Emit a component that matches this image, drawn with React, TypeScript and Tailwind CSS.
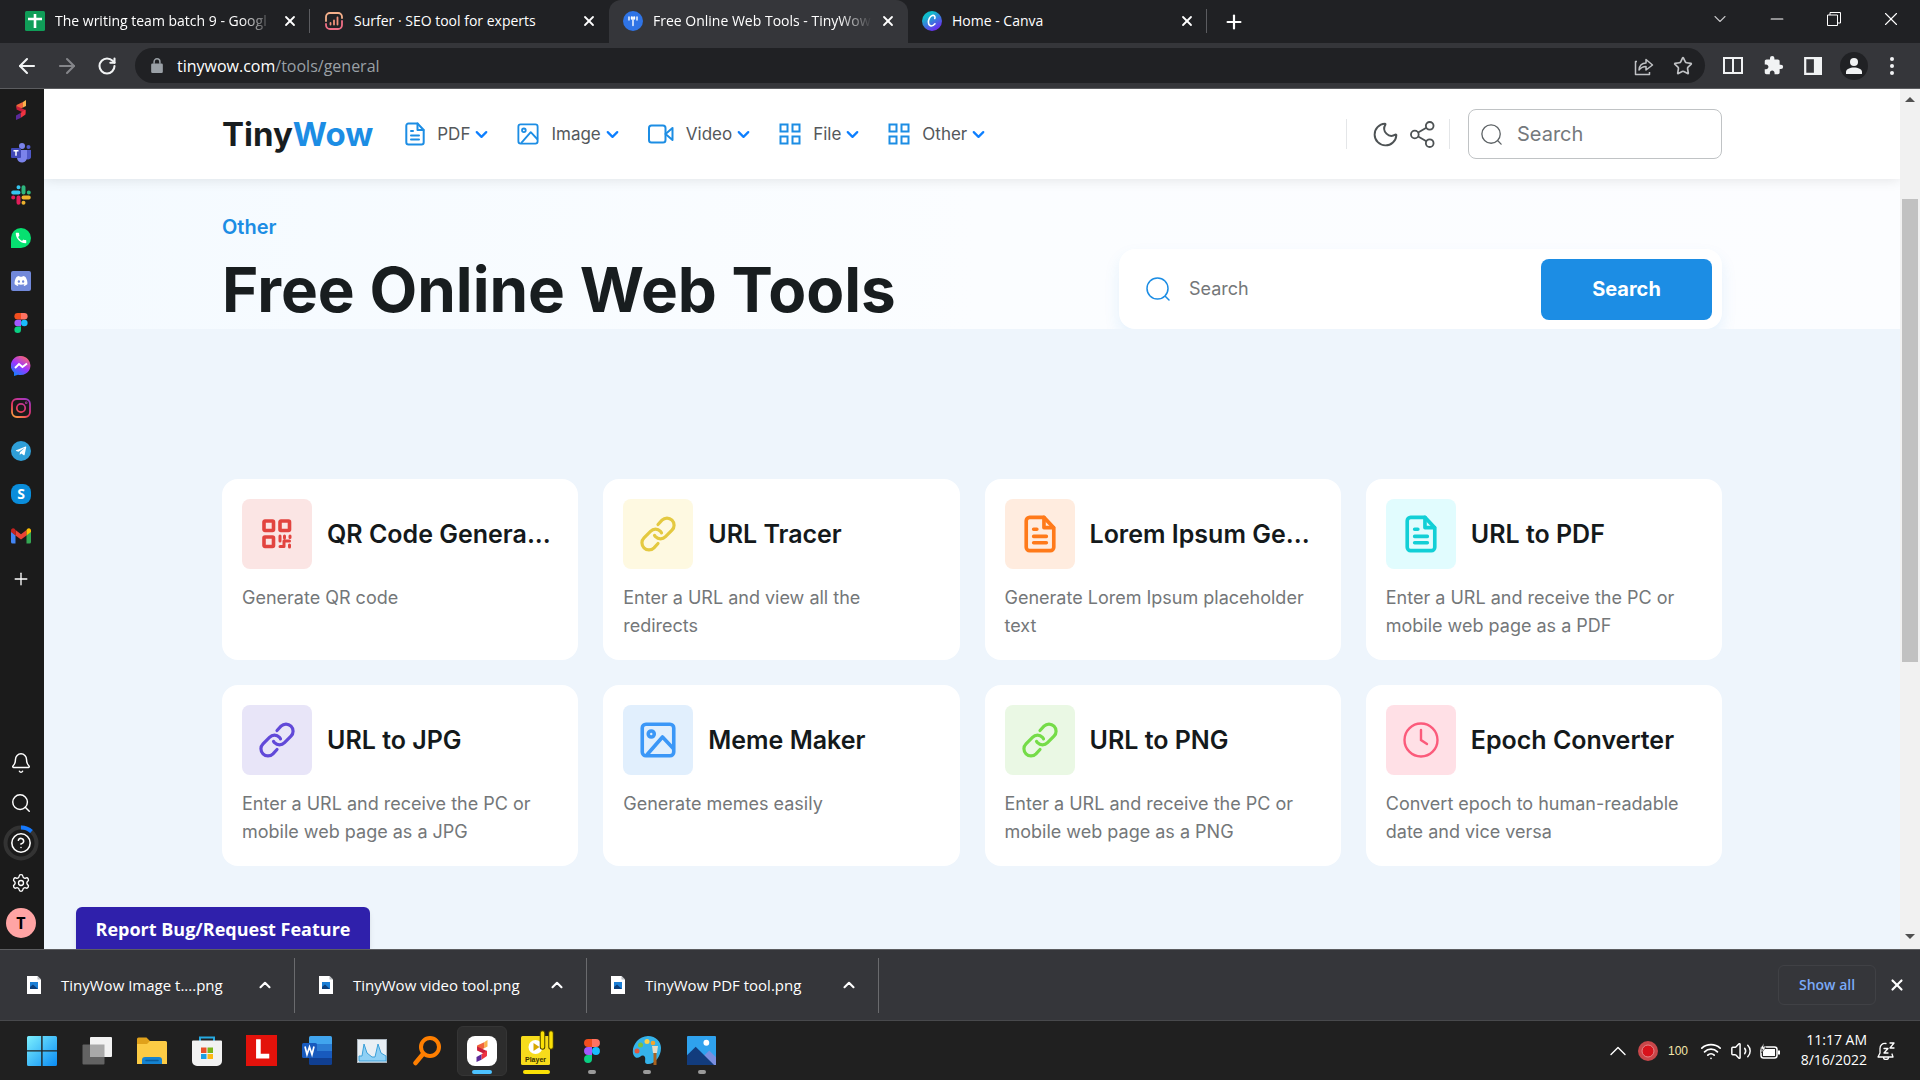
import type { ReactNode } from "react";
import {
  ArrowLeft,
  ArrowRight,
  Bell,
  ChevronDown,
  ChevronUp,
  CircleHelp,
  Minus,
  Moon,
  Plus,
  RotateCw,
  Search,
  Settings,
  Star,
  Volume2,
  Wifi,
  X,
} from "lucide-react";
import { FaDiscord, FaTelegramPlane } from "react-icons/fa";
import { MdCall, MdExtension } from "react-icons/md";

/* ---------- page icons ---------- */

type IconProps = { className?: string; stroke?: number };

function FileIcon({ className, stroke = 2 }: IconProps) {
  return (
    <svg viewBox="2 0 20 24" fill="none" stroke="currentColor" strokeWidth={stroke} strokeLinecap="round" strokeLinejoin="round" className={className}>
      <path d="M14.5 1.5H5.5A2.2 2.2 0 0 0 3.3 3.7v16.6a2.2 2.2 0 0 0 2.2 2.2h13a2.2 2.2 0 0 0 2.2-2.2V8z" />
      <path d="M14.5 1.5V8h6M8 9h2M8 13.5h8M8 17.5h8" />
    </svg>
  );
}

function ImageIcon({ className, stroke = 2 }: IconProps) {
  return (
    <svg viewBox="0 0 24 24" fill="none" stroke="currentColor" strokeWidth={stroke} strokeLinejoin="round" className={className}>
      <rect x="1.5" y="1.5" width="21" height="21" rx="2.5" />
      <circle cx="7.5" cy="8" r="2" />
      <path d="M4.5 22 15 10l7.5 8" />
    </svg>
  );
}

function VideoIcon({ className }: IconProps) {
  return (
    <svg viewBox="0 0 26 22" fill="none" stroke="currentColor" strokeWidth="2" strokeLinejoin="round" className={className}>
      <rect x="1" y="2.5" width="16.5" height="17" rx="2.5" />
      <path d="m17.5 11 7-6v12z" />
    </svg>
  );
}

function GridIcon({ className }: IconProps) {
  return (
    <svg viewBox="0 0 22 22" fill="none" stroke="currentColor" strokeWidth="2" className={className}>
      <rect x="1.5" y="1.5" width="7" height="7" />
      <rect x="13.5" y="1.5" width="7" height="7" />
      <rect x="1.5" y="13.5" width="7" height="7" />
      <rect x="13.5" y="13.5" width="7" height="7" />
    </svg>
  );
}

function LinkIcon({ className }: IconProps) {
  return (
    <svg viewBox="0 0 36 36" fill="none" stroke="currentColor" strokeWidth="3.2" strokeLinecap="round" className={className}>
      <path d="M18 8.5 22 4.2a7 7 0 0 1 10 10l-6.5 6.500a7 7 0 0 1-10 0 6.5 6.5 0 0 1-1-1.4" />
      <path d="m18 27.5-4 4.300a7 7 0 0 1-10-10l6.5-6.500a7 7 0 0 1 10 0q.8.8 1 1.6" />
    </svg>
  );
}

function QrIcon({ className }: IconProps) {
  return (
    <svg viewBox="0 0 30 30" fill="none" stroke="currentColor" strokeWidth="3.6" strokeLinejoin="round" className={className}>
      <rect x="2" y="2" width="9.5" height="9.5" rx="1" />
      <rect x="18" y="2" width="9.5" height="9.5" rx="1" />
      <rect x="2" y="18" width="9.5" height="9.5" rx="1" />
      <path strokeWidth="3" strokeLinecap="round" d="M18 17v5M18 27.5h4V22h5.5M22.5 17v2M28 17v1.5M27.5 26v2" />
    </svg>
  );
}

function ClockIcon({ className }: IconProps) {
  return (
    <svg viewBox="0 0 36 36" fill="none" stroke="currentColor" strokeWidth="2.4" strokeLinecap="round" className={className}>
      <circle cx="18" cy="18" r="16.5" />
      <path d="M18 8v10l6 4" />
    </svg>
  );
}

function LensIcon({ className }: IconProps) {
  return (
    <svg viewBox="0 0 24 24" fill="none" stroke="currentColor" strokeWidth="1.5" strokeLinecap="round" className={className}>
      <circle cx="11.5" cy="11.5" r="10.5" />
      <path d="m19.5 19.5 3.5 3.5" />
    </svg>
  );
}

function ShareNodes({ className }: IconProps) {
  return (
    <svg viewBox="0 0 26 28" fill="none" stroke="currentColor" strokeWidth="1.9" className={className}>
      <circle cx="5" cy="14" r="4" />
      <circle cx="20.5" cy="5" r="4" />
      <circle cx="20.5" cy="23" r="4" />
      <path d="m8.5 12 8.5-5M8.5 16l8.5 5" />
    </svg>
  );
}

/* ---------- brand icons ---------- */

function SurferMark({ className }: IconProps) {
  return (
    <svg viewBox="0 0 20 20" className={className}>
      <path fill="#f9b24a" d="M15 0v6l-3 1.5V2z" />
      <path fill="#f0643c" d="M12 2v5.5L8.5 9 5.5 7.500V5z" />
      <path fill="#c81e3c" d="M5.5 6 14.5 10v3.5L12 12.5 5.5 9.5z" />
      <path fill="#ef3340" d="M14.500 9.500v5L9.5 18v-5l2-1.5z" />
      <path fill="#5b2a9a" d="M9.5 13v5L5 20v-4.500z" />
    </svg>
  );
}

function TeamsMark({ className }: IconProps) {
  return (
    <svg viewBox="0 0 20 20" className={className}>
      <circle cx="17.5" cy="4" r="2" fill="#5059c9" />
      <path fill="#5059c9" d="M14 7h6v6a3 3 0 0 1-6 1z" />
      <circle cx="11" cy="3" r="3" fill="#7b83eb" />
      <path fill="#7b83eb" d="M6 7h10v7a5 5 0 0 1-10 1z" />
      <rect y="5" width="10" height="10" rx="1" fill="#4048b5" />
      <path stroke="#fff" strokeWidth="1.5" d="M2.5 7.8h5M5 7.8v5" />
    </svg>
  );
}

function SlackMark({ className }: IconProps) {
  return (
    <svg viewBox="0 0 20 20" strokeWidth="4" strokeLinecap="round" className={className}>
      <path stroke="#36c5f0" d="M2.2 7.5h5.3M7.5 2.2h0" />
      <path stroke="#2eb67d" d="M12.5 2.2v5.3M17.8 7.5h0" />
      <path stroke="#ecb22e" d="M12.5 12.5h5.3M12.5 17.8h0" />
      <path stroke="#e01e5a" d="M7.5 12.5v5.3M2.2 12.5h0" />
    </svg>
  );
}

function WhatsappMark() {
  return (
    <span className="flex size-5 items-center justify-center rounded-full rounded-bl-sm bg-[#06e070] text-white">
      <MdCall className="size-[14px]" />
    </span>
  );
}

function DiscordMark() {
  return (
    <span className="flex size-5 items-center justify-center rounded-xs bg-[#7289da] text-white">
      <FaDiscord className="size-[14px]" />
    </span>
  );
}

function FigmaMark({ className }: IconProps) {
  return (
    <svg viewBox="0 0 20 20" className={className}>
      <path fill="#f24e1e" d="M10 0H6.7a3.3 3.3 0 0 0 0 6.600H10z" />
      <path fill="#ff7262" d="M10 0h3.300a3.3 3.3 0 0 1 0 6.600H10z" />
      <path fill="#a259ff" d="M10 6.7H6.700a3.3 3.3 0 0 0 0 6.600H10z" />
      <circle cx="13.3" cy="10" r="3.3" fill="#1abcfe" />
      <path fill="#0acf83" d="M10 13.4H6.700a3.3 3.3 0 1 0 3.3 3.300z" />
    </svg>
  );
}

function MessengerMark({ className }: IconProps) {
  return (
    <svg viewBox="0 0 20 20" className={className}>
      <defs>
        <linearGradient id="messenger" x1="0.2" y1="1" x2="0.8" y2="0">
          <stop offset="0" stopColor="#0a84ff" />
          <stop offset=".5" stopColor="#a033ff" />
          <stop offset="1" stopColor="#ff6968" />
        </linearGradient>
      </defs>
      <path fill="url(#messenger)" d="M10 0a10 9.5 0 1 1-3 18.700L3 20v-3.500A9.5 9.5 0 0 1 10 0z" />
      <path d="m4 12 4-4 3.5 3L16 7.5" fill="none" stroke="#fff" strokeWidth="2" />
    </svg>
  );
}

function InstagramMark({ className }: IconProps) {
  return (
    <svg viewBox="0 0 20 20" fill="none" stroke="url(#insta)" strokeWidth="1.8" className={className}>
      <defs>
        <linearGradient id="insta" gradientUnits="userSpaceOnUse" x1="2" y1="20" x2="16" y2="0">
          <stop offset="0" stopColor="#fdb03c" />
          <stop offset=".45" stopColor="#ea3560" />
          <stop offset="1" stopColor="#9a37c8" />
        </linearGradient>
      </defs>
      <rect x="1" y="1" width="18" height="18" rx="5" />
      <circle cx="10" cy="10" r="4.2" />
      <circle cx="15.2" cy="4.8" r="0.4" />
    </svg>
  );
}

function TelegramMark() {
  return (
    <span className="flex size-5 items-center justify-center rounded-full bg-[#2f9fd8] text-white">
      <FaTelegramPlane className="size-3" />
    </span>
  );
}

function SkypeMark() {
  return (
    <span className="flex size-5 items-center justify-center rounded-lg bg-[#0a8ddb] text-sm leading-5 font-bold text-white">
      S
    </span>
  );
}

function GmailMark({ className }: IconProps) {
  return (
    <svg viewBox="0 0 20 20" className={className}>
      <path fill="#4285f4" d="M0 5.5 4.5 9v8.500h-3A1.5 1.5 0 0 1 0 16z" />
      <path fill="#34a853" d="M20 5.5 15.5 9v8.500h3A1.5 1.5 0 0 0 20 16z" />
      <path fill="#ea4335" d="m4.5 4 5.5 4.200L15.5 4v5.500L10 13.5 4.5 9.500z" />
      <path fill="#c5221f" d="M0 6V4.500a2.2 2.2 0 0 1 3.6-1.700L4.5 4v5.500z" />
      <path fill="#fbbc04" d="M20 6V4.500a2.2 2.2 0 0 0-3.6-1.700L15.5 4v5.500z" />
    </svg>
  );
}

/* ---------- data ---------- */

const tabs = [
  {
    title: "The writing team batch 9 - Googl",
    faded: true,
    divider: true,
    icon: (
      <svg viewBox="0 0 20 20" className="size-5">
        <rect width="20" height="20" rx="1.5" fill="#109d58" />
        <path d="M10 3v14M3 8h14" stroke="#fff" strokeWidth="2.6" />
      </svg>
    ),
  },
  {
    title: "Surfer · SEO tool for experts",
    icon: (
      <svg viewBox="0 0 20 20" fill="none" stroke="#f2917c" strokeWidth="1.8" strokeLinecap="round" className="size-5">
        <path d="M2 10V6a4 4 0 0 1 4-4h8a4 4 0 0 1 4 4v1" stroke="#f6b18c" />
        <path d="M18 10v4a4 4 0 0 1-4 4H6a4 4 0 0 1-4-4v-1" stroke="#ef6f86" />
        <path d="M6.500 12v1.500M10 9.500v4M13.500 6.500v7" />
      </svg>
    ),
  },
  {
    title: "Free Online Web Tools - TinyWow",
    active: true,
    faded: true,
    icon: (
      <svg viewBox="0 0 20 20" className="size-5">
        <circle cx="10" cy="10" r="10" fill="#2f74e6" />
        <path d="M6 6v3M8.500 6v2M11.500 6v2M14 6v3M10 6v8.500" stroke="#fff" strokeWidth="1.4" strokeLinecap="round" />
      </svg>
    ),
  },
  {
    title: "Home - Canva",
    divider: true,
    icon: (
      <svg viewBox="0 0 20 20" className="size-5">
        <defs>
          <linearGradient id="canva" x1="0.2" y1="0" x2="0.8" y2="1">
            <stop offset="0.2" stopColor="#10bccb" />
            <stop offset="0.9" stopColor="#6a2df0" />
          </linearGradient>
        </defs>
        <circle cx="10" cy="10" r="10" fill="url(#canva)" />
        <path d="M12.800 7.500c.8-2-.6-3.500-2.500-3-2.500.8-4.200 4.500-3.800 7.500.4 3.500 4 4 6.500.8" fill="none" stroke="#fff" strokeWidth="1.6" strokeLinecap="round" />
      </svg>
    ),
  },
];

const navItems = [
  { label: "PDF", icon: <FileIcon className="h-6 w-5" /> },
  { label: "Image", icon: <ImageIcon className="size-[22px]" /> },
  { label: "Video", icon: <VideoIcon className="h-[22px] w-[26px]" /> },
  { label: "File", icon: <GridIcon className="size-[22px]" /> },
  { label: "Other", icon: <GridIcon className="size-[22px]" /> },
];

const tools = [
  { title: "QR Code Genera...", text: "Generate QR code", tile: "bg-[#fbe5e4] text-[#e2443f]", icon: <QrIcon className="size-[30px]" /> },
  { title: "URL Tracer", text: "Enter a URL and view all the redirects", tile: "bg-[#fef9e1] text-[#e4c940]", icon: <LinkIcon className="size-9" /> },
  { title: "Lorem Ipsum Ge...", text: "Generate Lorem Ipsum placeholder text", tile: "bg-[#ffecdf] text-[#ff7a1a]", icon: <FileIcon className="h-[38px] w-8" stroke={2.3} /> },
  { title: "URL to PDF", text: "Enter a URL and receive the PC or mobile web page as a PDF", tile: "bg-[#e1fcfe] text-[#12cfd6]", icon: <FileIcon className="h-[38px] w-8" stroke={2.3} /> },
  { title: "URL to JPG", text: "Enter a URL and receive the PC or mobile web page as a JPG", tile: "bg-[#e8e5f8] text-[#6149d8]", icon: <LinkIcon className="size-9" /> },
  { title: "Meme Maker", text: "Generate memes easily", tile: "bg-[#e1effd] text-[#3b97f7]", icon: <ImageIcon className="size-9" stroke={2.4} /> },
  { title: "URL to PNG", text: "Enter a URL and receive the PC or mobile web page as a PNG", tile: "bg-[#eaf8e4] text-[#75dc48]", icon: <LinkIcon className="size-9" /> },
  { title: "Epoch Converter", text: "Convert epoch to human-readable date and vice versa", tile: "bg-[#ffe0e6] text-[#fb5b7b]", icon: <ClockIcon className="size-9" /> },
];

const downloads = ["TinyWow Image t....png", "TinyWow video tool.png", "TinyWow PDF tool.png"];

const sidebarApps = [
  { name: "Surfer", icon: <SurferMark className="size-5" /> },
  { name: "Teams", icon: <TeamsMark className="size-5" /> },
  { name: "Slack", icon: <SlackMark className="size-5" /> },
  { name: "WhatsApp", icon: <WhatsappMark /> },
  { name: "Discord", icon: <DiscordMark /> },
  { name: "Figma", icon: <FigmaMark className="size-5" /> },
  { name: "Messenger", icon: <MessengerMark className="size-5" /> },
  { name: "Instagram", icon: <InstagramMark className="size-5" /> },
  { name: "Telegram", icon: <TelegramMark /> },
  { name: "Skype", icon: <SkypeMark /> },
  { name: "Gmail", icon: <GmailMark className="size-5" /> },
  { name: "Add app", icon: <Plus className="size-5 text-white" strokeWidth={1.6} /> },
];

const taskbarApps: { name: string; icon: ReactNode; mark?: string; active?: boolean }[] = [
  {
    name: "Start",
    icon: (
      <svg viewBox="0 0 30 30" className="size-[30px]">
        <defs>
          <linearGradient id="win" x1="0" y1="0" x2="1" y2="1">
            <stop offset="0" stopColor="#7df0fd" />
            <stop offset="1" stopColor="#0a8cf5" />
          </linearGradient>
        </defs>
        <path fill="url(#win)" d="M0 1.500A1.500 1.500 0 0 1 1.500 0h12.700v14.200H0zM15.600 0h12.900A1.500 1.500 0 0 1 30 1.500v12.700H15.600zM0 15.600h14.200V30H1.500A1.500 1.500 0 0 1 0 28.500zM15.600 15.600H30v12.900a1.500 1.500 0 0 1-1.500 1.500H15.600z" />
      </svg>
    ),
  },
  {
    name: "Task view",
    icon: (
      <svg viewBox="0 0 30 30" className="size-[30px]">
        <rect x="0.5" y="8.5" width="22" height="20" rx="1" fill="#636363" />
        <rect x="8" y="1" width="22" height="20" rx="1" fill="#f2f2f2" />
        <path fill="#a9a9a9" d="M8 8.500h14.500V21H8z" />
      </svg>
    ),
  },
  {
    name: "File Explorer",
    icon: (
      <svg viewBox="0 0 30 30" className="size-[30px]">
        <path fill="#e0a11b" d="M0 3a1.500 1.500 0 0 1 1.500-1.500h8L13 5h15v8H0z" />
        <path fill="#fccb45" d="M0 8h10l3-3h15.500A1.500 1.500 0 0 1 30 6.500V28H0z" />
        <path fill="#1583d1" d="M5 28v-4a3 3 0 0 1 3-3h14a3 3 0 0 1 3 3v4z" />
        <path stroke="#0b5c9c" strokeWidth="1.5" strokeLinecap="round" d="M9 24.500h12" />
      </svg>
    ),
  },
  {
    name: "Microsoft Store",
    icon: (
      <svg viewBox="0 0 30 30" className="size-[30px]">
        <path d="M8 6V1.500h14V6" fill="none" stroke="#26a9e0" strokeWidth="2" />
        <path fill="#f2f2f2" d="M0 5.500a1 1 0 0 1 1-1h28a1 1 0 0 1 1 1V25a5 5 0 0 1-5 5H5a5 5 0 0 1-5-5z" />
        <path fill="#e8502a" d="M9 11.500h5.500V17H9z" />
        <path fill="#7bb51c" d="M15.500 11.500H21V17h-5.500z" />
        <path fill="#1c9fe4" d="M9 18h5.500v5H9z" />
        <path fill="#fdb813" d="M15.500 18H21v5h-5.500z" />
      </svg>
    ),
  },
  {
    name: "L",
    icon: (
      <svg viewBox="0 0 30 30" className="size-[31px]">
        <path fill="#e3120b" d="M0 0h30v30H0z" />
        <path fill="none" stroke="#fff" strokeWidth="4.5" d="M12 4v16.500h10.500" />
      </svg>
    ),
  },
  {
    name: "Word",
    icon: (
      <svg viewBox="0 0 30 30" className="size-[30px]">
        <path fill="#41a5ee" d="M7 1.500A1.500 1.500 0 0 1 8.500 0h20A1.500 1.500 0 0 1 30 1.500V8H7z" />
        <path fill="#2b7cd3" d="M7 8h23v7H7z" />
        <path fill="#185abd" d="M7 15h23v7H7z" />
        <path fill="#103f91" d="M7 22h23v5.500a1.500 1.500 0 0 1-1.500 1.500h-20A1.500 1.500 0 0 1 7 27.500z" />
        <rect y="7" width="15" height="15" rx="1.5" fill="#185abd" />
        <path d="m3 10.500 2 8 2.500-7.500 2.500 7.500 2-8" fill="none" stroke="#fff" strokeWidth="1.7" />
      </svg>
    ),
  },
  {
    name: "Resource Monitor",
    icon: (
      <svg viewBox="0 0 30 24" className="h-6 w-[30px]">
        <rect x="0.5" y="0.5" width="29" height="23" fill="#e9eff4" stroke="#aab4bc" />
        <path fill="#8fd0f5" stroke="#3ca0d9" d="M2 17h3L7 5l3 9 5 4h3l3-13 3 9 5 3v5H2z" />
      </svg>
    ),
  },
  {
    name: "Everything",
    icon: (
      <svg viewBox="0 0 30 30" fill="none" stroke="#ff7f00" strokeLinecap="round" className="size-[30px]">
        <circle cx="18" cy="11" r="9" strokeWidth="4" />
        <path d="m11 18-7.500 9" strokeWidth="4.5" />
      </svg>
    ),
  },
  {
    name: "Surfer",
    active: true,
    mark: "w-5 bg-[#4cc2ff]",
    icon: (
      <span className="flex size-[30px] items-center justify-center rounded-lg bg-white">
        <SurferMark className="size-[22px]" />
      </span>
    ),
  },
  {
    name: "Player",
    mark: "w-[27px] bg-[#fbe106]",
    icon: (
      <svg viewBox="0 0 34 36" className="-mt-1.5 h-9 w-[34px]">
        <rect x="1" y="6" width="29" height="29" rx="1.5" fill="#f7dc1c" />
        <circle cx="15.5" cy="17" r="7" fill="#fff" />
        <path fill="#d8a800" d="m13.500 13 6 4-6 4z" />
        <path stroke="#4d4400" strokeWidth="5.5" strokeLinecap="round" d="M22.500 3v14M31 3v14" />
        <path stroke="#fbe106" strokeWidth="3.5" strokeLinecap="round" d="M22.500 3v14M31 3v14" />
        <text x="5" y="32" fontSize="7" fontWeight="700" fontFamily="Liberation Sans, sans-serif" fill="#3a3300">
          Player
        </text>
      </svg>
    ),
  },
  { name: "Figma", mark: "w-2 bg-[#9a9a9a]", icon: <FigmaMark className="size-6" /> },
  {
    name: "Paint",
    mark: "w-2 bg-[#9a9a9a]",
    icon: (
      <svg viewBox="0 0 30 30" className="size-[30px]">
        <path fill="#35b3ea" d="M16 0c8 0 13 6 13 12 0 9-7 17-14 16-4-1 0-6-3-8s-5 4-9 1C-3 15 4 0 16 0z" />
        <circle cx="15" cy="5.5" r="2.5" fill="#fbd04a" />
        <circle cx="8.5" cy="9" r="2.5" fill="#7bc043" />
        <circle cx="5" cy="15" r="2.5" fill="#e2583e" />
        <circle cx="21" cy="7" r="2.3" fill="#f4a52c" />
        <path fill="#e9dcc4" d="M20 10h6l-1 7h-4z" />
        <path stroke="#a8621f" strokeWidth="3" d="M23 17v12" />
      </svg>
    ),
  },
  {
    name: "Photos",
    mark: "w-2 bg-[#9a9a9a]",
    icon: (
      <svg viewBox="0 0 30 30" className="size-[29px]">
        <rect width="30" height="30" rx="1" fill="#2fa2ee" />
        <path fill="#7a8fe0" d="m14 24 9-9 7 7v8H18z" />
        <path fill="#123c7d" d="m0 20 9-9 19 19H0z" />
        <circle cx="20" cy="7" r="3" fill="#fff" />
      </svg>
    ),
  },
];

/* ---------- browser chrome ---------- */

function TabStrip() {
  return (
    <div className="flex h-[43px] shrink-0 bg-[#202124] pl-[11px] text-white">
      {tabs.map((tab) => (
        <div
          key={tab.title}
          className={`relative flex h-full w-[299px] items-center pb-0.5 pl-3.5 ${tab.active ? "rounded-t-xl bg-[#35363a]" : ""}`}
        >
          {tab.icon}
          <span className={`ml-2.5 flex-1 text-sm leading-6 whitespace-nowrap ${tab.faded ? "mask-r-from-85%" : ""}`}>
            {tab.title}
          </span>
          <button aria-label={`Close ${tab.title}`} className="mr-3 ml-2">
            <X className="size-4" strokeWidth={2.7} />
          </button>
          {tab.divider && <span className="absolute right-0 h-6 w-px bg-[#5b5c60]" />}
        </div>
      ))}
      <button aria-label="New tab" className="ml-4">
        <Plus className="size-[22px]" strokeWidth={2.4} />
      </button>
      <div className="ml-auto flex items-center pr-px pb-1.5">
        <button aria-label="Search tabs" className="flex w-[57px] justify-center">
          <ChevronDown className="size-5 text-[#c4c5c7]" strokeWidth={1.3} />
        </button>
        <button aria-label="Minimize" className="flex w-[57px] justify-center">
          <Minus className="size-5" strokeWidth={1.4} />
        </button>
        <button aria-label="Restore" className="flex w-[57px] justify-center">
          <svg viewBox="0 0 14 14" fill="none" stroke="currentColor" className="size-[14px]">
            <path d="M.5 3h10v10.500H.500zM3 3V.5h10.500V11h-3" />
          </svg>
        </button>
        <button aria-label="Close window" className="flex w-[57px] justify-center">
          <X className="size-[22px]" strokeWidth={1.2} />
        </button>
      </div>
    </div>
  );
}

function Toolbar() {
  return (
    <div className="flex h-[46px] shrink-0 items-center border-b border-[#5c5d60] bg-[#35363a] text-[#f1f3f4]">
      <div className="flex w-[135px] shrink-0 items-center gap-4 pl-[15px]">
        <button aria-label="Back">
          <ArrowLeft className="size-6" strokeWidth={2.1} />
        </button>
        <button aria-label="Forward" className="text-[#85868a]">
          <ArrowRight className="size-6" strokeWidth={2.1} />
        </button>
        <button aria-label="Reload" className="ml-0.5">
          <RotateCw className="size-5" strokeWidth={2.5} />
        </button>
      </div>
      <div className="flex h-[35px] flex-1 items-center rounded-full bg-[#202124] pr-3 pl-4">
        <svg viewBox="0 0 14 18" className="h-[15px] w-3 text-[#9aa0a6]">
          <path fill="currentColor" d="M0 8a1.500 1.500 0 0 1 1.500-1.500h11A1.500 1.500 0 0 1 14 8v8.500a1.500 1.500 0 0 1-1.500 1.500h-11A1.500 1.500 0 0 1 0 16.500z" />
          <path d="M3.500 7V4.500a3.500 3.500 0 0 1 7 0V7" fill="none" stroke="currentColor" strokeWidth="1.8" />
        </svg>
        <p className="ml-3.5 text-base leading-6 text-[#9aa0a6]">
          <span className="text-white">tinywow.com</span>/tools/general
        </p>
        <button aria-label="Share this page" className="ml-auto text-[#c0c2c5]">
          <svg viewBox="0 0 20 20" fill="none" stroke="currentColor" strokeWidth="1.5" strokeLinejoin="round" className="size-5">
            <path d="M3 5.500H1.500v13h14V16M5 14c.5-5 3-7 7-7V3.500l6.500 5.500L12 14v-3.500c-3 0-5 1-7 3.500z" />
          </svg>
        </button>
        <button aria-label="Bookmark this tab" className="ml-[19px] text-[#c0c2c5]">
          <Star className="size-5" />
        </button>
      </div>
      <div className="flex items-center gap-5 pr-[26px] pl-[18px]">
        <button aria-label="Split view">
          <svg viewBox="0 0 20 18" fill="none" stroke="currentColor" strokeWidth="2" className="h-[18px] w-5">
            <path d="M1 1h18v15H1zM10 1v15" />
          </svg>
        </button>
        <button aria-label="Extensions">
          <MdExtension className="size-[21px]" />
        </button>
        <button aria-label="Side panel">
          <svg viewBox="0 0 18 18" fill="none" stroke="currentColor" strokeWidth="2.2" className="size-[18px]">
            <path d="M1.200 1.200h15.600v15.600H1.200z" />
            <path d="M11 1.200h6v15.600h-6z" fill="currentColor" />
          </svg>
        </button>
        <button aria-label="Profile" className="-mx-0.5 flex size-7 items-center justify-center rounded-full bg-[#202124]">
          <svg viewBox="0 0 16 16" fill="currentColor" className="size-4">
            <circle cx="8" cy="4" r="4" />
            <path d="M0 14c0-3 4-4.500 8-4.500s8 1.500 8 4.500v2H0z" />
          </svg>
        </button>
        <button aria-label="Menu" className="ml-1">
          <svg viewBox="0 0 4 18" fill="currentColor" className="h-[18px] w-1">
            <circle cx="2" cy="2" r="2" />
            <circle cx="2" cy="9" r="2" />
            <circle cx="2" cy="16" r="2" />
          </svg>
        </button>
      </div>
    </div>
  );
}

function Sidebar() {
  return (
    <aside className="flex w-11 shrink-0 flex-col items-center bg-[#1b1b1b] pt-[11px] pr-0.5 pb-1.5 text-white">
      <div className="flex h-[489px] flex-col justify-between">
        {sidebarApps.map((app) => (
          <button key={app.name} aria-label={app.name} className="block size-5">
            {app.icon}
          </button>
        ))}
      </div>
      <div className="mt-auto flex flex-col items-center">
        <button aria-label="Notifications" className="flex h-10 items-center">
          <Bell className="size-[22px]" strokeWidth={1.6} />
        </button>
        <button aria-label="Search" className="flex h-10 items-center">
          <Search className="size-[22px]" strokeWidth={1.6} />
        </button>
        <button aria-label="Help" className="relative flex h-10 items-center">
          <svg viewBox="0 0 36 36" fill="none" strokeWidth="4" className="size-9">
            <circle cx="18" cy="18" r="15.5" stroke="#333" />
            <path d="M18 2.500a15.500 15.500 0 0 1 10.500 4" stroke="#1479ff" />
          </svg>
          <CircleHelp className="absolute left-[7px] size-[22px]" strokeWidth={1.7} />
        </button>
        <button aria-label="Settings" className="flex h-10 items-center">
          <Settings className="size-5" strokeWidth={1.6} />
        </button>
        <button className="my-[5px] size-[30px] rounded-full bg-[#ffa4a4] text-base font-bold text-black">T</button>
      </div>
    </aside>
  );
}

/* ---------- page ---------- */

function SiteHeader() {
  return (
    <header className="z-10 shrink-0 bg-white shadow-[0_1px_12px_rgba(0,0,0,0.1)]">
      <div className="mx-auto flex h-[90px] w-full max-w-[1500px] items-center">
        <a href="#" className="text-[33px] leading-10 font-bold text-[#181d1f]">
          Tiny<span className="text-[#1c8de4]">Wow</span>
        </a>
        <nav className="ml-8 flex items-center gap-[26px]">
          {navItems.map((item) => (
            <button key={item.label} className="flex items-center text-[#1c8de4]">
              {item.icon}
              <span className="ml-3 text-[17px] leading-6 text-[#54585b]">{item.label}</span>
              <ChevronDown className="ml-0.5 size-[19px] text-[#0d7fff]" strokeWidth={2.8} />
            </button>
          ))}
        </nav>
        <div className="ml-auto flex h-[30px] items-center gap-2.5 border-x border-[#e4e6e8] pr-3.5 pl-6 text-[#4d5254]">
          <button aria-label="Dark mode">
            <Moon className="size-[29px]" strokeWidth={1.6} />
          </button>
          <button aria-label="Share">
            <ShareNodes className="h-[27px] w-[25px]" />
          </button>
        </div>
        <label className="ml-[18px] flex h-[50px] w-[254px] items-center rounded-lg border border-[#c0c3c5] px-3">
          <LensIcon className="size-[21px] shrink-0 text-[#5d6265]" />
          <input
            aria-label="Search the site"
            placeholder="Search"
            className="ml-[15px] w-full min-w-0 bg-transparent text-xl leading-7 outline-none placeholder:text-[#75797d]"
          />
        </label>
      </div>
    </header>
  );
}

function Hero() {
  return (
    <section className="shrink-0 bg-linear-to-r from-[#f4faff] via-[#fbfdff] via-50% to-[#fcfdff]">
      <div className="mx-auto flex h-[150px] w-full max-w-[1500px] items-end justify-between">
        <div>
          <p className="text-xl leading-7 font-semibold text-[#1c8de4]">Other</p>
          <h1 className="pt-2.5 text-[62px] leading-[78px] font-bold text-[#181d1f]">Free Online Web Tools</h1>
        </div>
        <form className="flex h-20 w-[603px] items-center rounded-2xl bg-white pr-2.5 pl-[27px] shadow-[0_8px_16px_rgba(28,141,228,0.1)]">
          <LensIcon className="size-6 shrink-0 text-[#1c8de4]" />
          <input
            aria-label="Search tools"
            placeholder="Search"
            className="ml-[19px] min-w-0 flex-1 text-lg outline-none placeholder:text-[#747779]"
          />
          <button type="button" className="h-[61px] w-[171px] rounded-lg bg-[#1c8de4] text-xl font-bold text-white">
            Search
          </button>
        </form>
      </div>
    </section>
  );
}

function ToolGrid() {
  return (
    <section className="flex-1 bg-[#eef5fc] pt-[150px]">
      <div className="mx-auto grid w-full max-w-[1500px] grid-cols-4 gap-[25px]">
        {tools.map((tool) => (
          <a key={tool.title} href="#" className="min-h-[181px] rounded-2xl bg-white p-5">
            <div className="flex items-center gap-[15px]">
              <div className={`flex size-[70px] shrink-0 items-center justify-center rounded-lg ${tool.tile}`}>{tool.icon}</div>
              <h2 className="text-[25px] leading-8 font-semibold whitespace-nowrap text-[#14191b]">{tool.title}</h2>
            </div>
            <p className="mt-[15px] pr-3 text-lg leading-7 text-[#747779]">{tool.text}</p>
          </a>
        ))}
      </div>
    </section>
  );
}

function Scrollbar() {
  return (
    <div aria-hidden className="flex w-5 shrink-0 flex-col items-center bg-[#f1f1f1] pt-2 pb-2.5">
      <span className="border-x-5 border-b-5 border-x-transparent border-b-[#505050]" />
      <span className="mt-[97px] h-[463px] w-4 bg-[#c1c1c1]" />
      <span className="mt-auto border-x-5 border-t-5 border-x-transparent border-t-[#505050]" />
    </div>
  );
}

/* ---------- bottom bars ---------- */

function DownloadBar() {
  return (
    <div className="flex h-[72px] shrink-0 items-center border-y border-t-[#5c5d60] border-b-[#48494c] bg-[#35363a] pl-[3px] text-white">
      {downloads.map((name) => (
        <div key={name} className="flex h-[55px] w-[292px] items-center border-r border-[#6a6b6e] pr-5 pl-6">
          <svg viewBox="0 0 14 18" className="h-[18px] w-[14px]">
            <path fill="#fff" d="M0 0h10.500L14 3.500V18H0z" />
            <path fill="#b9bcc0" d="M10.500 0 14 3.500h-3.500z" />
            <path fill="#1c7fd6" d="M3 6h8v7H3z" />
            <path fill="#0c3f7c" d="m3 11 3-2.500 5 4.500H3z" />
          </svg>
          <span className="ml-5 text-[15px] leading-6">{name}</span>
          <button aria-label={`Options for ${name}`} className="ml-auto">
            <ChevronUp className="size-[18px]" strokeWidth={2.8} />
          </button>
        </div>
      ))}
      <button className="ml-auto h-10 w-[98px] rounded-md border border-[#404145] text-sm font-semibold text-[#7baaf7]">Show all</button>
      <button aria-label="Close downloads bar" className="mr-3.5 ml-3">
        <X className="size-[18px]" strokeWidth={2.9} />
      </button>
    </div>
  );
}

function Taskbar() {
  return (
    <div className="flex h-[59px] shrink-0 items-center bg-[#202020] pl-[14px] text-white">
      {taskbarApps.map((app) => (
        <button key={app.name} aria-label={app.name} className="relative flex h-full w-[55px] items-center justify-center">
          <span
            className={`flex size-[50px] items-center justify-center rounded-md ${app.active ? "border border-[#353535] bg-[#2d2d2d]" : ""}`}
          >
            {app.icon}
          </span>
          {app.mark && <span className={`absolute bottom-[6px] h-1 rounded-full ${app.mark}`} />}
        </button>
      ))}
      <div className="ml-auto flex items-center pr-[25px]">
        <ChevronUp className="size-7" strokeWidth={1.2} />
        <svg viewBox="0 0 20 20" className="ml-1.5 size-5">
          <circle cx="10" cy="10" r="10" fill="#c9474a" />
          <circle cx="10" cy="10" r="6" fill="#d8121b" stroke="#e58588" />
        </svg>
        <span className="ml-2.5 font-['Liberation_Sans',sans-serif] text-xs leading-4 text-[#f3e6ab]">100</span>
        <Wifi className="ml-3 size-[22px]" strokeWidth={1.9} />
        <Volume2 className="ml-2 size-[22px]" strokeWidth={1.6} />
        <svg viewBox="0 0 20 16" className="ml-2 h-4 w-5">
          <rect x="1" y="4" width="16" height="11" rx="2.5" fill="none" stroke="#fff" strokeWidth="1.5" />
          <rect x="3" y="6" width="12" height="7" fill="#fff" />
          <path fill="#fff" d="M18 7.500h2v4h-2z" />
          <path fill="#fff" stroke="#202020" strokeWidth=".6" d="M4 0 0 6h2.500L1.500 10 6 4H3.500z" />
        </svg>
        <div className="ml-4 w-[71px] pb-0.5 text-right text-sm leading-5 whitespace-nowrap">
          <p>11:17 AM</p>
          <p>8/16/2022</p>
        </div>
        <svg viewBox="0 0 18 18" fill="none" stroke="#fff" strokeWidth="1.3" strokeLinejoin="round" strokeLinecap="round" className="ml-2.5 size-[18px]">
          <path d="M9 1.500C5 1 3 3.500 3 6.500V11l-2 4h15l-1-3M6.500 15.500a2.500 2 0 0 0 5 0M7 6.500h4L7 11h4M13 1h4l-4 5h4" />
        </svg>
      </div>
    </div>
  );
}

export default function App() {
  return (
    <div className="flex h-screen flex-col overflow-hidden font-['Open_Sans','Noto_Sans',sans-serif]">
      <TabStrip />
      <Toolbar />
      <div className="flex min-h-0 flex-1">
        <Sidebar />
        <main className="relative flex min-w-0 flex-1 flex-col overflow-hidden font-[Inter,sans-serif]">
          <SiteHeader />
          <Hero />
          <ToolGrid />
          <button className="absolute bottom-0 left-8 z-20 h-[42px] w-[294px] rounded-t-md bg-[#2f20ab] pt-0.5 font-['Open_Sans',sans-serif] text-lg leading-7 font-bold text-white shadow-md">
            Report Bug/Request Feature
          </button>
        </main>
        <Scrollbar />
      </div>
      <DownloadBar />
      <Taskbar />
    </div>
  );
}
